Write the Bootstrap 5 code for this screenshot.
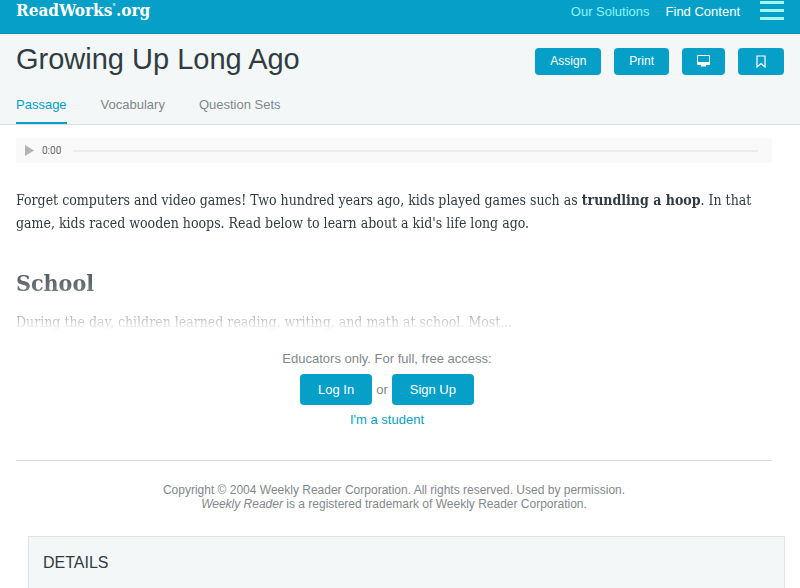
<!DOCTYPE html>
<html lang="en">
<head>
<meta charset="utf-8">
<meta name="viewport" content="width=device-width, initial-scale=1">
<title>Growing Up Long Ago - ReadWorks.org</title>
<link rel="stylesheet" href="https://cdn.jsdelivr.net/npm/bootstrap@5.3.0/dist/css/bootstrap.min.css">
<style>
:root{--rw-blue:#059fc7;--rw-ink:#303c42;--rw-grey:#81888c;--rw-pale:#f3f7f8}
body{font-family:"Liberation Sans",Arial,sans-serif;font-size:13px;line-height:20px;color:var(--rw-grey);background:#fff}
a{text-decoration:none;color:var(--rw-blue)}
.topbar{background:var(--rw-blue);height:34px;border-bottom:1px solid #0790b4;padding:0 16px}
.brand-name{font-family:"DejaVu Serif Condensed","DejaVu Serif",serif;font-stretch:condensed;font-weight:700;font-size:17px;line-height:20px;color:#fff}
.brand-name sup{font-size:4px;top:-10px}
.topbar .nav-link{color:#fff;padding:0;line-height:24px}
.topbar .nav-link.solutions{color:#8ff5f8}
.menu-btn{width:24px;height:22px;margin-left:20px}
.page-head{background:var(--rw-pale);border-bottom:1px solid #dae0e2;padding:0 16px}
.page-head h1{font-size:29px;line-height:34px;font-weight:400;color:var(--rw-ink);padding-top:8px}
.tools{padding-top:14px;gap:13px}
.btn-rw{--bs-btn-color:#fff;--bs-btn-bg:var(--rw-blue);--bs-btn-hover-color:#fff;--bs-btn-hover-bg:#048bae;--bs-btn-active-color:#fff;--bs-btn-active-bg:#047d9d;border:0;border-radius:4px}
.tool{height:27px;font-size:12px;line-height:27px;padding:0 15px}
.tool-wide{padding:0 16px}
.lesson-tabs{gap:34px;padding-top:17px}
.lesson-tabs .nav-link{color:var(--rw-grey);padding:0 0 5px;line-height:24px;border-bottom:2px solid transparent}
.lesson-tabs .nav-link.active{color:var(--rw-blue);border-color:var(--rw-blue)}
.content{padding:13px 28px 0 16px}
.player{height:25px;background:#f9f9f9;padding:0 14px 0 9px;font-family:Roboto,sans-serif;font-size:10px;color:#666}
.player button{width:9px}
.seek{-webkit-appearance:none;appearance:none;height:2px;background:#ebebeb;margin-left:12px;min-width:0}
.seek::-webkit-slider-thumb{-webkit-appearance:none;width:0;height:0}
.story{font-family:"DejaVu Serif Condensed","DejaVu Serif",serif;font-stretch:condensed;font-size:14px;line-height:23px;color:var(--rw-ink);padding-top:26px;--fade:linear-gradient(#000 50%,rgba(0,0,0,.75) 71%,rgba(0,0,0,.34) 91%,transparent 98%);-webkit-mask-image:var(--fade);mask-image:var(--fade)}
.story h2{font-size:23px;line-height:30px;font-weight:700;margin:33px 0 13px}
.access{padding:15px 14px 0 0}
.access .btn{font-size:13px;line-height:19px;padding:6px 18px;margin:5px 0}
.rule{margin:30px 0 22px;color:#dcdfe0;opacity:1}
.legal{font-size:12px;line-height:14px}
.details{background:var(--rw-pale);border:1px solid #dde2e3;border-bottom:0;margin:25px 15px 0 28px;padding:16px 14px}
.details h2{font-size:16px;line-height:20px;font-weight:400;color:var(--rw-ink)}
</style>
<script src="https://cdn.jsdelivr.net/npm/bootstrap@5.3.0/dist/js/bootstrap.bundle.min.js"></script>
</head>
<body class="d-flex flex-column min-vh-100">
<header class="topbar d-flex align-items-start justify-content-between">
  <a class="brand-name" href="#">ReadWorks<sup>®</sup>.org</a>
  <nav class="d-flex align-items-start" aria-label="Main">
    <a class="nav-link solutions me-3" href="#">Our Solutions</a>
    <a class="nav-link" href="#">Find Content</a>
    <button class="menu-btn btn border-0 p-0 d-flex" type="button" aria-label="Menu">
      <svg width="24" height="22" viewBox="0 0 24 22" fill="#a0f8f9" aria-hidden="true"><path d="M0 1h24v3H0zM0 9h24v3H0zM0 17h24v3H0z"/></svg>
    </button>
  </nav>
</header>
<section class="page-head">
  <div class="d-flex justify-content-between align-items-start">
    <h1 class="mb-0">Growing Up Long Ago</h1>
    <div class="tools d-flex">
      <button class="btn btn-rw tool" type="button">Assign</button>
      <button class="btn btn-rw tool" type="button">Print</button>
      <button class="btn btn-rw tool d-flex align-items-center" type="button" aria-label="Present">
        <svg width="13" height="14" viewBox="0 0 13 14" aria-hidden="true"><path fill="#fff" fill-rule="evenodd" d="M1 0h11q1 0 1 1v8q0 1-1 1H9v1.500H4V10H1q-1 0-1-1V1q0-1 1-1zm0 1v6h11V1z"/></svg>
      </button>
      <button class="btn btn-rw tool tool-wide d-flex align-items-center" type="button" aria-label="Bookmark">
        <svg width="14" height="13" viewBox="0 0 14 13" aria-hidden="true"><path fill="none" stroke="#fff" stroke-width="1.200" d="M3 1h8v11L7 8.500 3 12z"/></svg>
      </button>
    </div>
  </div>
  <nav class="lesson-tabs nav" aria-label="Lesson">
    <a class="nav-link active" aria-current="page" href="#">Passage</a>
    <a class="nav-link" href="#">Vocabulary</a>
    <a class="nav-link" href="#">Question Sets</a>
  </nav>
</section>
<main class="content">
  <div class="player d-flex align-items-center">
    <button class="btn border-0 p-0 d-flex" type="button" aria-label="Play"><svg width="9" height="11" viewBox="0 0 9 11" aria-hidden="true"><path fill="#b3b3b3" d="M0 0l9 5.500L0 11z"/></svg></button>
    <span class="ms-2">0:00</span>
    <input class="seek flex-grow-1" type="range" min="0" max="100" value="0" aria-label="Seek">
  </div>
  <article class="story">
    <p class="mb-0">Forget computers and video games! Two hundred years ago, kids played games such as <strong>trundling a hoop</strong>. In that game, kids raced wooden hoops. Read below to learn about a kid's life long ago.</p>
    <h2>School</h2>
    <p class="mb-0">During the day, children learned reading, writing, and math at school. Most...</p>
  </article>
  <section class="access text-center">
    <div>Educators only. For full, free access:</div>
    <div class="d-flex justify-content-center align-items-center gap-1">
      <a class="btn btn-rw" href="#">Log In</a><span>or</span><a class="btn btn-rw" href="#">Sign Up</a>
    </div>
    <a href="#">I'm a student</a>
  </section>
  <hr class="rule">
  <p class="legal text-center mb-0">Copyright © 2004 Weekly Reader Corporation. All rights reserved. Used by permission.<br><em>Weekly Reader</em> is a registered trademark of Weekly Reader Corporation.</p>
</main>
<section class="details flex-grow-1">
  <h2 class="mb-0">DETAILS</h2>
</section>
</body>
</html>
